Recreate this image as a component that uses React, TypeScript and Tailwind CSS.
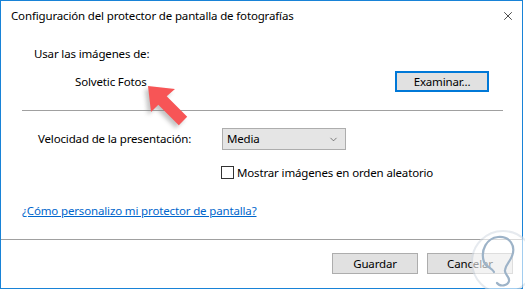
import { X, ChevronDown } from 'lucide-react';

function Arrow() {
  return (
    <svg
      className="absolute left-0 top-0 pointer-events-none"
      width="525"
      height="289"
      viewBox="0 0 525 289"
    >
      <defs>
        <filter id="sh" x="-20%" y="-20%" width="140%" height="140%">
          <feGaussianBlur stdDeviation="2" />
        </filter>
      </defs>
      <polygon
        points="145,89 172,92 163.7,99.3 184.2,119.8 175.8,128.2 155.3,107.7 148,115"
        fill="#7a7a7a"
        opacity="0.45"
        filter="url(#sh)"
      />
      <polygon
        points="148,86 175,89 166.7,96.3 187.2,116.8 178.8,125.2 158.3,104.7 151,112"
        fill="#f75556"
      />
    </svg>
  );
}

function Watermark() {
  return (
    <svg
      className="absolute left-0 top-0 pointer-events-none"
      width="525"
      height="289"
      viewBox="0 0 525 289"
    >
      <circle cx="503" cy="262" r="31" fill="white" opacity="0.6" stroke="#d6dde5" strokeWidth="2" />
      <path
        d="M484 262 C480 250 487 238 498 237 C510 236 516 246 512 256 C510 262 506 264 505 270 C504 275 510 276 509 281 C508 286 500 287 497 283"
        fill="none"
        stroke="#9db3c8"
        strokeWidth="2.2"
        strokeLinecap="round"
      />
      <path
        d="M484 262 C486 267 492 268 494 272"
        fill="none"
        stroke="#9db3c8"
        strokeWidth="2.2"
        strokeLinecap="round"
      />
    </svg>
  );
}

export default function App() {
  return (
    <div className="relative w-[525px] h-[289px] bg-white overflow-hidden font-['Noto_Sans',sans-serif] text-[11.5px] tracking-[-0.15px] leading-[16px] text-black">
      <div className="w-[523px] h-[289px] border border-[#1883d7] flex flex-col">
        {/* Title bar */}
        <div className="h-[30px] flex items-center pl-[10px] pr-[7px]">
          <span>Configuración del protector de pantalla de fotografías</span>
          <X className="ml-auto w-[14px] h-[14px]" strokeWidth={1.2} />
        </div>

        <div className="mt-[15px] pl-[33px]">Usar las imágenes de:</div>

        <div className="mt-[9px] h-[21px] flex items-center">
          <span className="pl-[74px]">Solvetic Fotos</span>
          <button className="ml-auto mr-[33px] w-[94px] h-[21px] border-2 border-[#0078d7] bg-[#e1e1e1] flex items-center justify-center">
            Examinar...
          </button>
        </div>

        <div className="mt-[18px] ml-[21px] mr-[19px] h-px bg-[#a0a0a0]" />

        <div className="mt-[17px] h-[22px] flex items-center">
          <span className="pl-[37px] w-[221px]">Velocidad de la presentación:</span>
          <div className="w-[124px] h-[22px] border border-[#adadad] bg-[#e5e5e5] flex items-center pl-[4px] pr-[6px]">
            <span>Media</span>
            <ChevronDown className="ml-auto w-[11px] h-[11px] text-[#333]" strokeWidth={1.3} />
          </div>
        </div>

        <div className="mt-[16px] h-[13px] flex items-center pl-[220px] gap-[3px]">
          <div className="w-[13px] h-[13px] border border-[#333] bg-white" />
          <span>Mostrar imágenes en orden aleatorio</span>
        </div>

        <div className="mt-[24px] pl-[21px]">
          <a href="#" className="text-[#0066cc] underline">
            ¿Cómo personalizo mi protector de pantalla?
          </a>
        </div>

        <div className="mt-[20px] h-px bg-[#a0a0a0]" />

        <div className="mt-[13px] flex justify-end gap-[9px] pr-[9px]">
          <button className="w-[86px] h-[21px] border border-[#adadad] bg-[#e1e1e1] flex items-center justify-center">
            Guardar
          </button>
          <button className="w-[86px] h-[21px] border border-[#adadad] bg-[#e1e1e1] flex items-center justify-center">
            Cancelar
          </button>
        </div>
      </div>
      <Arrow />
      <Watermark />
    </div>
  );
}
